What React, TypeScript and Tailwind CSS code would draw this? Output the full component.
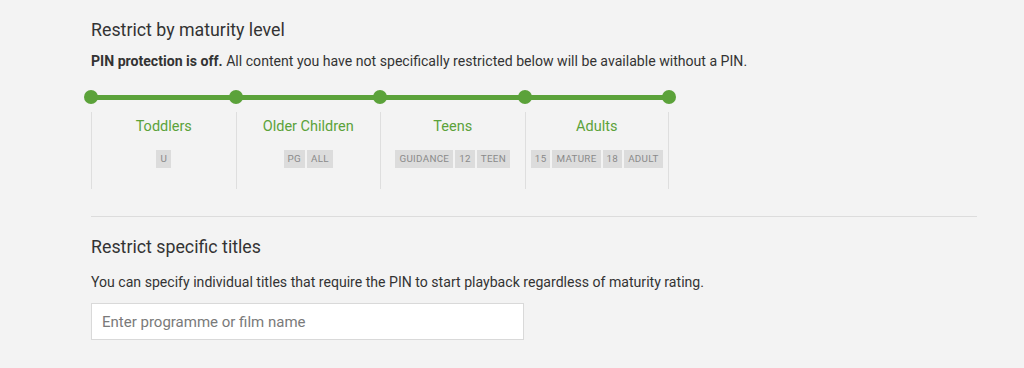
import React from "react";

const levels = [
  { name: "Toddlers", badges: ["U"] },
  { name: "Older Children", badges: ["PG", "ALL"] },
  { name: "Teens", badges: ["GUIDANCE", "12", "TEEN"] },
  { name: "Adults", badges: ["15", "MATURE", "18", "ADULT"] },
];

export default function App() {
  return (
    <div
      className="w-[1024px] h-[368px] bg-[#f3f3f3] overflow-hidden text-[#333]"
      style={{ fontFamily: "Roboto, 'Liberation Sans', sans-serif" }}
    >
      <div className="ml-[91px] w-[886px] pt-[19px]">
        <h2 className="text-[17.8px] leading-[22px] text-[#333]">Restrict by maturity level</h2>
        <p className="mt-[11px] text-[14.1px] leading-[18px] text-[#333]">
          <span className="font-bold">PIN protection is off.</span> All content you have not specifically restricted below will be available without a PIN.
        </p>

        <div className="mt-[20px] -ml-[7px] w-[592px] flex items-center">
          {[0, 1, 2, 3].map((i) => (
            <React.Fragment key={i}>
              <div className="w-[14px] h-[14px] rounded-full bg-[#5ba23a] shrink-0" />
              <div className="flex-1 h-[5px] -mx-[2px] bg-[#5ba23a]" />
            </React.Fragment>
          ))}
          <div className="w-[14px] h-[14px] rounded-full bg-[#5ba23a] shrink-0" />
        </div>

        <div className="mt-[8px] w-[578px] grid grid-cols-4">
          {levels.map((l, i) => (
            <div
              key={l.name}
              className={`h-[77px] border-l border-[#dedede] flex flex-col items-center pt-[6px] ${i === 3 ? "border-r" : ""}`}
            >
              <div className="text-[14.5px] leading-[18px] text-[#5ba23a]">{l.name}</div>
              <div className="mt-[14px] flex gap-[2px]">
                {l.badges.map((b) => (
                  <span
                    key={b}
                    className="h-[18px] px-[4px] bg-[#dcdcdc] text-[9.8px] leading-[18px] text-[#8a8a8a] tracking-[0.3px]"
                  >
                    {b}
                  </span>
                ))}
              </div>
            </div>
          ))}
        </div>

        <div className="mt-[27px] border-t border-[#dcdcdc]" />

        <h2 className="mt-[19px] text-[17.8px] leading-[22px] text-[#333]">Restrict specific titles</h2>
        <p className="mt-[15px] text-[14.1px] leading-[18px] text-[#333]">
          You can specify individual titles that require the PIN to start playback regardless of maturity rating.
        </p>
        <input
          className="mt-[12px] w-[433px] h-[37px] bg-white border border-[#d9d9d9] px-[10px] text-[15px] text-[#333] placeholder:text-[#7a7a7a] outline-none"
          style={{ fontFamily: "Roboto, 'Liberation Sans', sans-serif" }}
          placeholder="Enter programme or film name"
        />
      </div>
    </div>
  );
}
